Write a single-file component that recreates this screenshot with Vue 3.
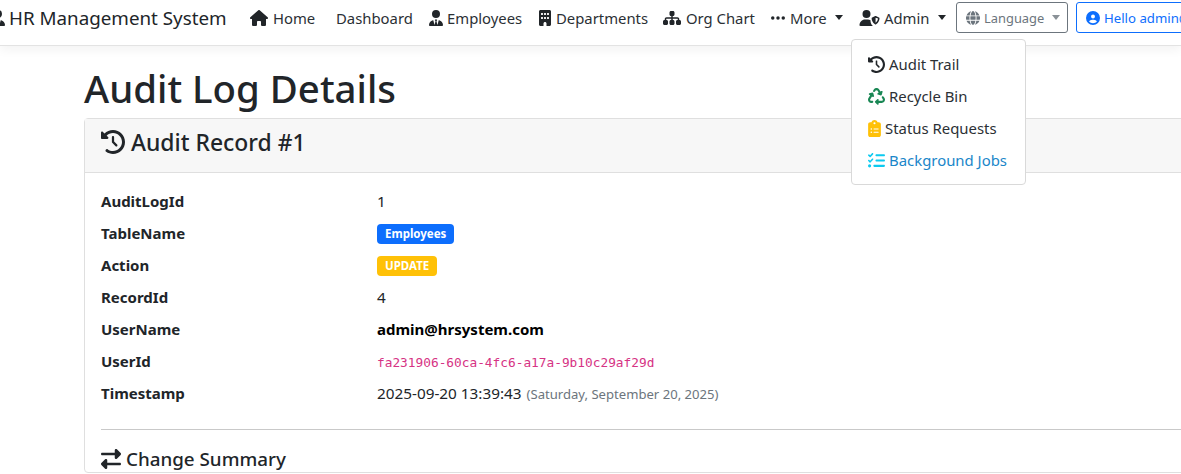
<script setup>
const house = 'M575.8 255.5c0 18-15 32.1-32 32.1h-32l.7 160.2c0 2.7-.2 5.4-.5 8.1V472c0 22.1-17.9 40-40 40H456c-1.1 0-2.2 0-3.3-.1c-1.4 .1-2.8 .1-4.2 .1H416 392c-22.1 0-40-17.9-40-40V448 384c0-17.7-14.3-32-32-32H256c-17.7 0-32 14.3-32 32v64 24c0 22.1-17.9 40-40 40H160 128.1c-1.5 0-3-.1-4.5-.2c-1.2 .1-2.4 .2-3.6 .2H104c-22.1 0-40-17.9-40-40V360c0-.9 0-1.9 .1-2.8V287.6H32c-18 0-32-14-32-32.1c0-9 3-17 10-24L266.4 8c7-7 15-8 22-8s15 2 21 7L564.8 231.5c8 7 12 15 11 24z'
const history = 'M75 75L41 41C25.9 25.9 0 36.6 0 57.9V168c0 13.3 10.7 24 24 24H134.1c21.4 0 32.1-25.9 17-41l-30.8-30.8C155 85.5 203 64 256 64c106 0 192 86 192 192s-86 192-192 192c-40.8 0-78.6-12.7-109.7-34.4c-14.5-10.1-34.4-6.6-44.6 7.9s-6.6 34.4 7.9 44.6C151.2 495 201.7 512 256 512c141.4 0 256-114.6 256-256S397.4 0 256 0C185.3 0 121.3 28.7 75 75zm181 53c-13.3 0-24 10.7-24 24V256c0 6.4 2.5 12.5 7 17l72 72c9.4 9.4 24.6 9.4 33.9 0s9.4-24.6 0-33.9l-65-65V152c0-13.3-10.7-24-24-24z'
const swap = 'M32 96l320 0V32c0-12.9 7.8-24.6 19.8-29.6s25.7-2.2 34.9 6.9l96 96c6 6 9.4 14.1 9.4 22.6s-3.4 16.6-9.4 22.6l-96 96c-9.2 9.2-22.9 11.9-34.9 6.9s-19.8-16.6-19.8-29.6V160L32 160c-17.7 0-32-14.3-32-32s14.3-32 32-32zM480 352c17.7 0 32 14.3 32 32s-14.3 32-32 32H160v64c0 12.9-7.8 24.6-19.8 29.6s-25.7 2.2-34.9-6.9l-96-96c-6-6-9.4-14.1-9.4-22.6s3.4-16.6 9.4-22.6l96-96c9.2-9.2 22.9-11.9 34.9-6.9s19.8 16.6 19.8 29.6l0 64H480z'
const circleUser = 'M399 384.2C376.9 345.8 335.4 320 288 320H224c-47.4 0-88.9 25.8-111 64.2c35.2 39.2 86.2 63.8 143 63.8s107.8-24.7 143-63.8zM0 256a256 256 0 1 1 512 0A256 256 0 1 1 0 256zm256 16a72 72 0 1 0 0-144 72 72 0 1 0 0 144z'
const userTie = 'M96 128a128 128 0 1 0 256 0A128 128 0 1 0 96 128zm94.5 200.2l18.6 31L175.8 483.1l-36-146.9c-2-8.1-9.8-13.4-17.9-11.3C51.9 342.4 0 405.8 0 481.3c0 17 13.8 30.7 30.7 30.7H162.5c0 0 0 0 .1 0H168 280h5.5c0 0 0 0 .1 0H417.3c17 0 30.7-13.8 30.7-30.7c0-75.5-51.9-138.9-121.9-156.4c-8.1-2-15.9 3.3-17.9 11.3l-36 146.9L238.9 359.2l18.6-31c6.4-10.7-1.3-24.2-13.7-24.2H224 204.3c-12.4 0-20.1 13.6-13.7 24.2z'
const building = 'M48 0C21.5 0 0 21.5 0 48V464c0 26.5 21.5 48 48 48h96V432c0-26.5 21.5-48 48-48s48 21.5 48 48v80h96c26.5 0 48-21.5 48-48V48c0-26.5-21.5-48-48-48H48zM64 240c0-8.8 7.2-16 16-16h32c8.8 0 16 7.2 16 16v32c0 8.8-7.2 16-16 16H80c-8.8 0-16-7.2-16-16V240zm112-16h32c8.8 0 16 7.2 16 16v32c0 8.8-7.2 16-16 16H176c-8.8 0-16-7.2-16-16V240c0-8.8 7.2-16 16-16zm80 16c0-8.8 7.2-16 16-16h32c8.8 0 16 7.2 16 16v32c0 8.8-7.2 16-16 16H272c-8.8 0-16-7.2-16-16V240zM80 96h32c8.8 0 16 7.2 16 16v32c0 8.8-7.2 16-16 16H80c-8.8 0-16-7.2-16-16V112c0-8.8 7.2-16 16-16zm80 16c0-8.8 7.2-16 16-16h32c8.8 0 16 7.2 16 16v32c0 8.8-7.2 16-16 16H176c-8.8 0-16-7.2-16-16V112zM272 96h32c8.8 0 16 7.2 16 16v32c0 8.8-7.2 16-16 16H272c-8.8 0-16-7.2-16-16V112c0-8.8 7.2-16 16-16z'
const sitemap = 'M208 80c0-26.5 21.5-48 48-48h64c26.5 0 48 21.5 48 48v64c0 26.5-21.5 48-48 48h-8v40H464c30.9 0 56 25.1 56 56v32h8c26.5 0 48 21.5 48 48v64c0 26.5-21.5 48-48 48H464c-26.5 0-48-21.5-48-48V368c0-26.5 21.5-48 48-48h8V288c0-4.4-3.6-8-8-8H312v40h8c26.5 0 48 21.5 48 48v64c0 26.5-21.5 48-48 48H256c-26.5 0-48-21.5-48-48V368c0-26.5 21.5-48 48-48h8V280H112c-4.4 0-8 3.6-8 8v32h8c26.5 0 48 21.5 48 48v64c0 26.5-21.5 48-48 48H48c-26.5 0-48-21.5-48-48V368c0-26.5 21.5-48 48-48h8V288c0-30.9 25.1-56 56-56H264V192h-8c-26.5 0-48-21.5-48-48V80z'
const globe = 'M352 256c0 22.2-1.2 43.6-3.3 64H163.3c-2.2-20.4-3.3-41.8-3.3-64s1.2-43.6 3.3-64H348.7c2.2 20.4 3.3 41.8 3.3 64zm28.8-64H503.9c5.3 20.5 8.1 41.9 8.1 64s-2.8 43.5-8.1 64H380.8c2.1-20.6 3.2-42 3.2-64s-1.1-43.4-3.2-64zm112.6-32H376.7c-10-63.9-29.8-117.4-55.3-151.6c78.3 20.7 142 77.5 171.9 151.6zm-149.1 0H167.7c6.1-36.4 15.5-68.6 27-94.7c10.5-23.6 22.2-40.7 33.5-51.5C239.4 3.2 248.7 0 256 0s16.6 3.2 27.8 13.8c11.3 10.8 23 27.9 33.5 51.5c11.6 26 20.9 58.2 27 94.7zm-209 0H18.6C48.6 85.9 112.2 29.1 190.6 8.4C165.1 42.6 145.3 96.1 135.3 160zM8.1 192H131.2c-2.1 20.6-3.2 42-3.2 64s1.1 43.4 3.2 64H8.1C2.8 299.5 0 278.1 0 256s2.8-43.5 8.1-64zM194.7 446.6c-11.6-26-20.9-58.2-27-94.6H344.3c-6.1 36.4-15.5 68.6-27 94.6c-10.5 23.6-22.2 40.7-33.5 51.5C272.6 508.8 263.3 512 256 512s-16.6-3.2-27.8-13.8c-11.3-10.8-23-27.9-33.5-51.5zM135.3 352c10 63.9 29.8 117.4 55.3 151.6C112.2 482.9 48.6 426.1 18.6 352H135.3zm358.1 0c-30 74.1-93.6 130.9-171.9 151.6c25.5-34.2 45.2-87.7 55.3-151.6H493.4z'
const recycle = 'M174.7 45.1C192.2 17 223 0 256 0s63.8 17 81.3 45.1l38.6 61.7 27-15.6c8.4-4.9 18.9-4.2 26.6 1.7s11.1 15.9 8.6 25.3l-23.4 87.4c-3.4 12.8-16.6 20.4-29.4 17l-87.4-23.4c-9.4-2.5-16.3-10.4-17.6-20s3.4-19.1 11.8-23.9l28.4-16.4L283 79c-5.8-9.3-16-15-27-15s-21.2 5.7-27 15l-17.5 28c-9.2 14.8-28.6 19.5-43.6 10.5c-15.3-9.2-20.2-29.2-10.7-44.4l17.5-28zM429.5 251.9c15-9 34.4-4.3 43.6 10.5l24.4 39.1c9.4 15.1 14.4 32.4 14.6 50.2c.3 53.1-42.7 96.4-95.8 96.4L320 448v32c0 9.7-5.8 18.5-14.8 22.2s-19.3 1.7-26.2-5.2l-64-64c-9.4-9.4-9.4-24.6 0-33.9l64-64c6.9-6.9 17.2-8.9 26.2-5.2s14.8 12.5 14.8 22.2v32l96.2 0c17.6 0 31.9-14.4 31.8-32c0-5.9-1.7-11.7-4.8-16.7l-24.4-39.1c-9.5-15.2-4.7-35.2 10.7-44.4zm-364.6-31L36 204.2c-8.4-4.9-13.1-14.3-11.8-23.9s8.2-17.5 17.6-20l87.4-23.4c12.8-3.4 26 4.2 29.4 17L182 241.2c2.5 9.4-.9 19.3-8.6 25.3s-18.2 6.6-26.6 1.7l-26.5-15.3L68.8 335.3c-3.1 5-4.8 10.8-4.8 16.7c-.1 17.6 14.2 32 31.8 32l32.2 0c17.7 0 32 14.3 32 32s-14.3 32-32 32l-32.2 0C42.7 448-.3 404.8 0 351.6c.1-17.8 5.1-35.1 14.6-50.2l50.3-80.5z'
const listCheck = 'M152.1 38.2c9.9 8.9 10.7 24 1.8 33.9l-72 80c-4.4 4.9-10.6 7.8-17.2 7.9s-12.9-2.4-17.6-7L7 113C-2.3 103.6-2.3 88.4 7 79s24.6-9.4 33.9 0l22.1 22.1 55.1-61.2c8.9-9.9 24-10.7 33.9-1.8zm0 160c9.9 8.9 10.7 24 1.8 33.9l-72 80c-4.4 4.9-10.6 7.8-17.2 7.9s-12.9-2.4-17.6-7L7 273c-9.4-9.4-9.4-24.6 0-33.9s24.6-9.4 33.9 0l22.1 22.1 55.1-61.2c8.9-9.9 24-10.7 33.9-1.8zM224 96c0-17.7 14.3-32 32-32H480c17.7 0 32 14.3 32 32s-14.3 32-32 32H256c-17.7 0-32-14.3-32-32zm0 160c0-17.7 14.3-32 32-32H480c17.7 0 32 14.3 32 32s-14.3 32-32 32H256c-17.7 0-32-14.3-32-32zM160 416c0-17.7 14.3-32 32-32H480c17.7 0 32 14.3 32 32s-14.3 32-32 32H192c-17.7 0-32-14.3-32-32zM48 368a48 48 0 1 1 0 96 48 48 0 1 1 0-96z'
const clipboard = 'M192 0c-41.8 0-77.4 26.7-90.5 64H64C28.7 64 0 92.7 0 128V448c0 35.3 28.7 64 64 64H320c35.3 0 64-28.7 64-64V128c0-35.3-28.7-64-64-64H282.5C269.4 26.7 233.8 0 192 0zm0 64a32 32 0 1 1 0 64 32 32 0 1 1 0-64zM72 272a24 24 0 1 1 48 0 24 24 0 1 1 -48 0zm104-16H304c8.8 0 16 7.2 16 16s-7.2 16-16 16H176c-8.8 0-16-7.2-16-16s7.2-16 16-16zM72 368a24 24 0 1 1 48 0 24 24 0 1 1 -48 0zm88 0c0-8.8 7.2-16 16-16H304c8.8 0 16 7.2 16 16s-7.2 16-16 16H176c-8.8 0-16-7.2-16-16z'

const rows = [
  { label: 'AuditLogId', value: '1' },
  { label: 'TableName', badge: 'Employees', tone: 'blue' },
  { label: 'Action', badge: 'UPDATE', tone: 'amber' },
  { label: 'RecordId', value: '4' },
  { label: 'UserName', value: 'admin@hrsystem.com', strong: true },
  { label: 'UserId', code: 'fa231906-60ca-4fc6-a17a-9b10c29af29d' },
  { label: 'Timestamp', value: '2025-09-20 13:39:43', note: '(Saturday, September 20, 2025)' },
]
</script>

<template>
  <div class="page">
    <header class="navbar">
      <div class="brand">
        <svg class="brand-icon" viewBox="0 0 448 512"><path :d="userTie" /></svg>
        <span>HR Management System</span>
      </div>
      <nav class="nav">
        <a class="link home"><svg class="ic" viewBox="0 0 576 512"><path :d="house" /></svg>Home</a>
        <a class="link dash">Dashboard</a>
        <a class="link emp"><svg class="ic tie" viewBox="0 0 448 512"><path :d="userTie" /></svg>Employees</a>
        <a class="link dep"><svg class="ic bld" viewBox="0 0 384 512"><path :d="building" /></svg>Departments</a>
        <a class="link org"><svg class="ic map" viewBox="0 0 576 512"><path :d="sitemap" /></svg>Org Chart</a>
        <a class="link more">
          <svg class="ic dots" viewBox="0 0 448 128"><circle cx="56" cy="64" r="56" /><circle cx="224" cy="64" r="56" /><circle cx="392" cy="64" r="56" /></svg>More<i class="caret" />
        </a>
        <a class="link admin">
          <svg class="ic shield" viewBox="0 0 640 512"><path fill-rule="evenodd" d="M224 0a128 128 0 1 1 0 256A128 128 0 0 1 224 0zM178 304h92c30 0 58 8 82 24-2 58 16 130 76 184H30c-16 0-30-14-30-30 0-98 80-178 178-178zM504 195c6-3 14-3 20 0l98 42c11 5 18 15 18 27-1 52-22 148-116 198-6 3-14 3-20 0-94-50-115-146-116-198 0-12 7-22 18-27zM514 248v156c50-30 74-90 78-130z" /></svg>Admin<i class="caret" />
        </a>
      </nav>
      <button class="lang"><svg class="globe" viewBox="0 0 512 512"><path :d="globe" /></svg>Language<i class="caret light" /></button>
      <button class="hello"><svg class="user" viewBox="0 0 512 512"><path :d="circleUser" /></svg>Hello admin@hrsystem.com</button>
    </header>

    <main class="content">
      <h1 class="title">Audit Log Details</h1>
      <section class="card">
        <div class="card-head">
          <svg class="head-ic" viewBox="0 0 512 512"><path :d="history" /></svg>
          <h2>Audit Record #1</h2>
        </div>
        <div class="card-body">
          <dl class="grid">
            <div v-for="row in rows" :key="row.label" class="row">
              <dt>{{ row.label }}</dt>
              <dd>
                <span v-if="row.badge" class="badge" :class="row.tone">{{ row.badge }}</span>
                <code v-else-if="row.code">{{ row.code }}</code>
                <strong v-else-if="row.strong">{{ row.value }}</strong>
                <template v-else>{{ row.value }}</template>
                <small v-if="row.note">{{ row.note }}</small>
              </dd>
            </div>
          </dl>
          <hr />
          <h3 class="summary"><svg class="sum-ic" viewBox="0 0 512 512"><path :d="swap" /></svg>Change Summary</h3>
        </div>
      </section>
    </main>

    <div class="menu">
      <a class="item"><svg class="mi hist" viewBox="0 0 512 512"><path :d="history" /></svg>Audit Trail</a>
      <a class="item"><svg class="mi rec" viewBox="0 0 512 512"><path :d="recycle" /></svg>Recycle Bin</a>
      <a class="item"><svg class="mi clip" viewBox="0 0 384 512"><path :d="clipboard" /></svg>Status Requests</a>
      <a class="item jobs"><svg class="mi chk" viewBox="0 0 512 512"><path :d="listCheck" /></svg>Background Jobs</a>
    </div>
  </div>
</template>

<style>
html, body { margin: 0; overflow: hidden; background: #fff; }
</style>

<style scoped>
.page {
  position: relative;
  width: 1181px;
  height: 474px;
  overflow: hidden;
  background: #fff;
  color: #212529;
  font-family: "Noto Sans", "Open Sans", sans-serif;
  font-size: 14.85px;
}
.navbar {
  display: flex;
  align-items: center;
  height: 35px;
  padding-bottom: 10px;
  border-bottom: 1px solid #e3e3e3;
  box-shadow: 0 4px 10px rgba(0, 0, 0, 0.05);
  white-space: nowrap;
  box-sizing: content-box;
}
.brand {
  display: flex;
  align-items: center;
  flex: none;
  width: 250px;
  font-size: 18.8px;
  color: #212529;
}
.brand-icon { width: 14px; height: 16px; margin: 0 4px 0 -9px; fill: #212529; flex: none; }
.nav { display: flex; align-items: center; width: 706px; flex: none; }
.link { display: flex; align-items: center; color: #2b3035; }
.home { width: 86px; }
.dash { width: 93px; }
.emp { width: 110px; }
.dep { width: 124px; }
.org { width: 108px; }
.more { width: 88px; }
.ic { height: 16px; fill: #212529; flex: none; }
.home .ic { width: 18px; margin-right: 5px; }
.tie { width: 14px; margin-right: 4px; }
.bld { width: 12px; margin-right: 5px; }
.map { width: 18px; margin-right: 5px; }
.dots { width: 14px; height: 4px; margin-right: 5px; }
.shield { width: 21px; margin-right: 4px; }
.caret {
  display: inline-block;
  margin-left: 8px;
  border-top: 5px solid #212529;
  border-left: 4.5px solid transparent;
  border-right: 4.5px solid transparent;
}
.caret.light { border-top-color: #8a9197; }
.lang {
  display: flex;
  align-items: center;
  flex: none;
  width: 112px;
  height: 31px;
  padding: 0 9px;
  box-sizing: border-box;
  background: #fff;
  border: 1px solid #6c757d;
  border-radius: 3px;
  color: #6c757d;
  font: inherit;
  font-size: 12.9px;
}
.globe { width: 14px; height: 14px; fill: #6c757d; margin-right: 4px; flex: none; }
.hello {
  display: flex;
  align-items: center;
  flex: none;
  height: 31px;
  margin-left: 8px;
  padding: 0 9px;
  box-sizing: border-box;
  background: #fff;
  border: 1px solid #0d6efd;
  border-radius: 3px;
  color: #0d6efd;
  font: inherit;
  font-size: 13.2px;
}
.user { width: 14px; height: 14px; fill: #0d6efd; margin-right: 4px; flex: none; }
.content { padding: 16px 0 0 84px; width: 1200px; }
.title {
  margin: 0 0 3px;
  height: 53px;
  font-size: 38.4px;
  line-height: 53px;
  font-weight: 500;
  color: #212529;
}
.card {
  border: 1px solid #dfdfdf;
  border-radius: 4px;
  background: #fff;
}
.card-head {
  display: flex;
  align-items: center;
  height: 46px;
  padding: 0 16px 7px;
  background: #f7f7f7;
  border-bottom: 1px solid #dfdfdf;
}
.head-ic { width: 24px; height: 24px; fill: #212529; margin-right: 6px; flex: none; }
.card-head h2 { margin: 0; font-size: 22.9px; font-weight: 500; }
.card-body { padding: 12px 16px 0; }
.grid { margin: 0; }
.row { display: flex; align-items: center; height: 32px; }
dt { width: 276px; flex: none; font-weight: 700; font-size: 15px; }
dd { margin: 0; font-size: 15.3px; }
strong { font-weight: 700; color: #000; font-size: 15px; }
code { font-family: "DejaVu Sans Mono", "Liberation Mono", monospace; font-size: 12.8px; color: #d63384; }
small { margin-left: 5px; font-size: 13.1px; color: #6c757d; }
.badge {
  display: inline-block;
  padding: 0 8px;
  height: 20px;
  line-height: 20px;
  border-radius: 4px;
  color: #fff;
  font-size: 11.5px;
  font-weight: 700;
}
.blue { background: #0d6efd; }
.amber { background: #ffc107; }
hr {
  margin: 20px 0 0;
  border: 0;
  border-top: 1px solid #c9c9c9;
}
.summary {
  display: flex;
  align-items: center;
  margin: 16px 0 0;
  font-size: 18.8px;
  font-weight: 500;
}
.sum-ic { width: 20px; height: 20px; fill: #212529; margin-right: 5px; flex: none; }
.menu {
  position: absolute;
  left: 851px;
  top: 39px;
  width: 175px;
  height: 146px;
  box-sizing: border-box;
  padding: 8px 0;
  background: #fff;
  border: 1px solid #d9d9d9;
  border-radius: 4px;
}
.item {
  display: flex;
  align-items: center;
  height: 32px;
  padding-left: 16px;
  font-size: 14.9px;
  color: #2b3035;
}
.jobs { color: #1a86c9; }
.mi { flex: none; margin-right: 4px; }
.hist { width: 17px; height: 17px; fill: #212529; }
.rec { width: 17px; height: 17px; fill: #198754; }
.clip { width: 13px; height: 17px; fill: #ffc107; }
.chk { width: 17px; height: 17px; fill: #0dcaf0; }
</style>
